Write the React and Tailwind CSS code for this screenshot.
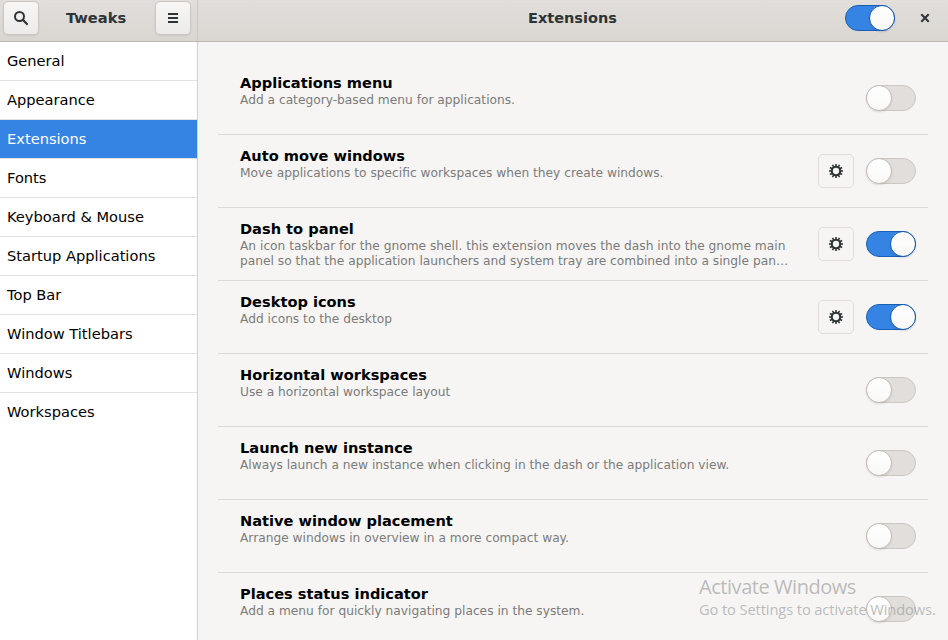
import React from "react";

const categories = [
  "General",
  "Appearance",
  "Extensions",
  "Fonts",
  "Keyboard & Mouse",
  "Startup Applications",
  "Top Bar",
  "Window Titlebars",
  "Windows",
  "Workspaces",
];

const extensions = [
  { name: "Applications menu", lines: ["Add a category-based menu for applications."] },
  { name: "Auto move windows", lines: ["Move applications to specific workspaces when they create windows."], prefs: true },
  {
    name: "Dash to panel",
    lines: [
      "An icon taskbar for the gnome shell. this extension moves the dash into the gnome main",
      "panel so that the application launchers and system tray are combined into a single pan…",
    ],
    prefs: true,
    on: true,
  },
  { name: "Desktop icons", lines: ["Add icons to the desktop"], prefs: true, on: true },
  { name: "Horizontal workspaces", lines: ["Use a horizontal workspace layout"] },
  { name: "Launch new instance", lines: ["Always launch a new instance when clicking in the dash or the application view."] },
  { name: "Native window placement", lines: ["Arrange windows in overview in a more compact way."] },
  { name: "Places status indicator", lines: ["Add a menu for quickly navigating places in the system."] },
];

function Switch({ on }) {
  return (
    <button
      role="switch"
      aria-checked={!!on}
      className={`flex h-[26px] w-[50px] shrink-0 rounded-full border ${
        on ? "justify-end border-[#185fb4] bg-[#3584e4]" : "justify-start border-[#cdc7c2] bg-[#e1dedb]"
      }`}
    >
      <span
        className={`-m-px size-[26px] rounded-full border bg-linear-to-b from-white to-[#f9f8f7] shadow-[0_1px_2px_rgba(0,0,0,0.12)] ${
          on ? "border-[#185fb4]" : "border-[#c5beb7]"
        }`}
      />
    </button>
  );
}

function Gear() {
  const teeth = [0, 30, 60, 90, 120, 150, 180, 210, 240, 270, 300, 330];
  return (
    <svg width="16" height="16" viewBox="0 0 16 16" fill="none" stroke="#2e3436">
      <circle cx="8" cy="8" r="4.2" strokeWidth="2.1" />
      {teeth.map((a) => (
        <path key={a} d="M8 1v2.6" strokeWidth="1.6" transform={`rotate(${a} 8 8)`} />
      ))}
    </svg>
  );
}

function HeaderButton({ label, children }) {
  return (
    <button
      aria-label={label}
      className="flex h-[34px] w-9 shrink-0 items-center justify-center rounded-[5px] border border-[#cdc7c2] bg-linear-to-b from-[#f7f6f5] to-[#edebe9] shadow-[0_1px_2px_rgba(0,0,0,0.08)]"
    >
      {children}
    </button>
  );
}

export default function App() {
  return (
    <div className="relative flex h-[640px] w-[948px] flex-col overflow-hidden bg-[#f6f5f4] font-['DejaVu_Sans',sans-serif] text-[14.67px] text-black">
      <header className="flex h-[42px] shrink-0 border-b border-[#bfb8b1] bg-linear-to-b from-[#e1dedb] to-[#dad6d2] text-[#2e3436]">
        <div className="flex w-[198px] items-start justify-between border-r border-[#cdc7c2] pt-px pr-[6px] pl-[3px]">
          <HeaderButton label="Search">
            <svg width="16" height="16" viewBox="0 0 16 16" fill="none" stroke="#2e3436">
              <circle cx="6.5" cy="6.5" r="4.5" strokeWidth="2" />
              <path d="M9.8 9.8l4.2 4.2" strokeWidth="2.2" strokeLinecap="round" />
            </svg>
          </HeaderButton>
          <h1 className="pt-2 pr-[2px] text-[14.67px] leading-[18px] font-bold">Tweaks</h1>
          <HeaderButton label="Menu">
            <svg width="16" height="16" viewBox="0 0 16 16" fill="#2e3436">
              <path d="M3 3h10v2H3zM3 7h10v2H3zM3 11h10v2H3z" />
            </svg>
          </HeaderButton>
        </div>
        <div className="flex flex-1 items-start">
          <h2 className="ml-[330px] w-[317px] pt-[9px] text-[14.5px] leading-[18px] font-bold">Extensions</h2>
          <div className="pt-[5px]">
            <Switch on />
          </div>
          <button aria-label="Close" className="mt-[10px] ml-[22px]">
            <svg width="16" height="16" viewBox="0 0 16 16" stroke="#2e3436" strokeWidth="2">
              <path d="M4.3 4.3l7.4 7.4M11.7 4.3l-7.4 7.4" />
            </svg>
          </button>
        </div>
      </header>

      <div className="flex min-h-0 flex-1">
        <nav className="w-[198px] shrink-0 border-r border-[#d5d0cc] bg-white">
          {categories.map((c, i) => (
            <div
              key={c}
              className={`flex h-[39px] items-center border-b pl-[7px] text-[14.63px] ${
                c === "Extensions" ? "bg-[#3584e4] text-white" : ""
              } ${i === categories.length - 1 ? "border-transparent" : "border-[#e2e2e2]"}`}
            >
              {c}
            </div>
          ))}
        </nav>

        <main className="flex-1 pt-5 pr-5 pl-5">
          {extensions.map((e) => (
            <section key={e.name} className="flex h-[73px] items-start border-b border-[#dcdad8] pr-3 pl-[22px]">
              <div className="flex-1 pt-3 whitespace-nowrap">
                <h3 className="mb-px text-[14.6px] leading-[18px] font-bold">{e.name}</h3>
                {e.lines.map((l) => (
                  <p key={l} className="text-[12.22px] leading-[15px] text-[#7b7b7a]">
                    {l}
                  </p>
                ))}
              </div>
              <div className="flex h-[72px] items-center gap-3">
                {e.prefs && (
                  <button
                    aria-label="Settings"
                    className="flex h-[34px] w-9 items-center justify-center rounded-[5px] border border-[#dfdcd9]"
                  >
                    <Gear />
                  </button>
                )}
                <Switch on={e.on} />
              </div>
            </section>
          ))}
        </main>
      </div>

      <div className="pointer-events-none absolute top-[574px] left-[699px] font-['Open_Sans',sans-serif] whitespace-nowrap text-[#999]/65">
        <div className="text-[20px] leading-[26px] tracking-[-0.45px]">Activate Windows</div>
        <div className="text-[14.67px] leading-[18px] tracking-[-0.1px]">Go to Settings to activate Windows.</div>
      </div>
    </div>
  );
}
